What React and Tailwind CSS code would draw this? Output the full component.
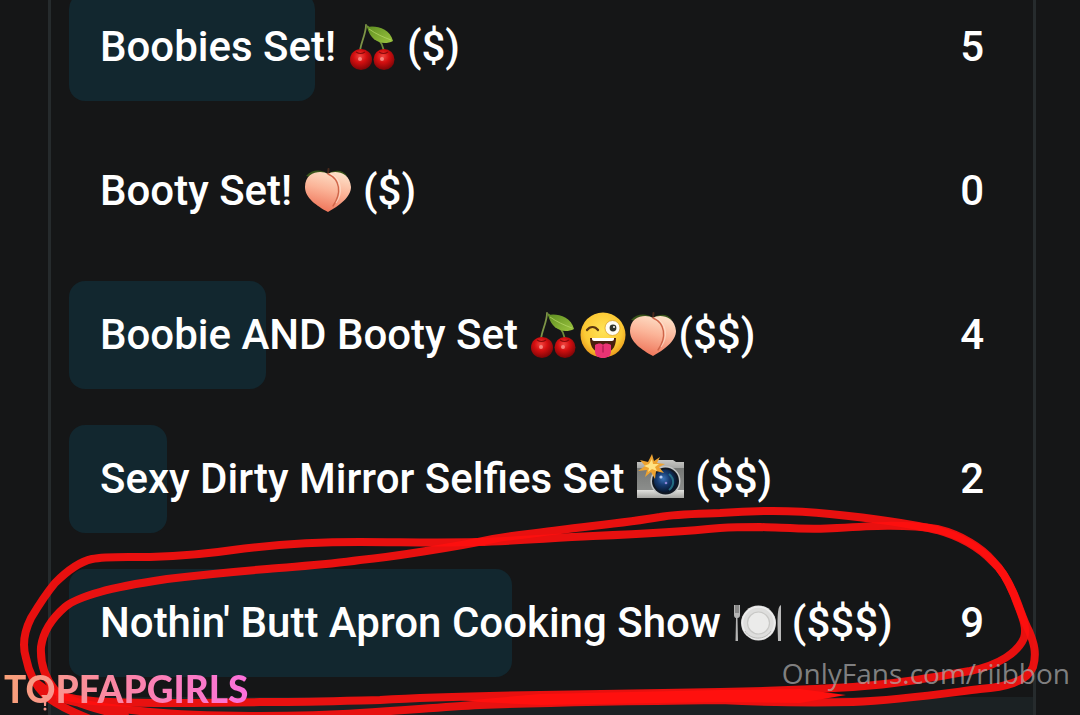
import React from 'react';

const Cherries = () => (
  <svg viewBox="0 0 50 50" className="h-[50px] w-[50px] shrink-0" role="img" aria-label="cherries">
    <defs>
      <radialGradient id="cherry" cx="0.45" cy="0.35" r="0.65">
        <stop offset="0" stopColor="#f2453f" />
        <stop offset="0.45" stopColor="#d40f10" />
        <stop offset="1" stopColor="#7d0507" />
      </radialGradient>
      <linearGradient id="leaf" x1="0" y1="0" x2="1" y2="1">
        <stop offset="0" stopColor="#5f8f22" />
        <stop offset="1" stopColor="#9cc43f" />
      </linearGradient>
    </defs>
    <path d="M19 3 C19 12 14 20 13 29" fill="none" stroke="#7d9447" strokeWidth="1.8" strokeLinecap="round" />
    <path d="M20 4 C28 12 35 19 37 29" fill="none" stroke="#6d8a3a" strokeWidth="1.8" />
    <path d="M20 5 C28 3 43 6 46 19 C36 24 24 20 20 5 Z" fill="url(#leaf)" />
    <path d="M22 7 C29 12 36 15 44 18" fill="none" stroke="#b4d665" strokeWidth="0.8" />
    <ellipse cx="14" cy="37.5" rx="11" ry="10.5" fill="url(#cherry)" />
    <ellipse cx="37" cy="37.5" rx="10.5" ry="10.5" fill="url(#cherry)" />
    <path d="M9 30 C12 32 15 32 18 30 M32 30 C35 32 38 32 41 30" fill="none" stroke="#8a0a0a" strokeWidth="1.2" />
    <circle cx="13" cy="37" r="2" fill="#ffa6a0" opacity="0.7" />
    <circle cx="35" cy="37" r="2" fill="#ffa6a0" opacity="0.7" />
  </svg>
);

const Peach = () => (
  <svg viewBox="0 0 50 50" className="h-[50px] w-[50px] shrink-0" role="img" aria-label="peach">
    <defs>
      <linearGradient id="peachSkin" x1="0.65" y1="0" x2="0.35" y2="1">
        <stop offset="0" stopColor="#fde0c8" />
        <stop offset="0.45" stopColor="#fbb498" />
        <stop offset="1" stopColor="#ee7257" />
      </linearGradient>
    </defs>
    <path d="M3 10 C9 3 19 3 25 8 C32 3 40 4 44 10 L25 15 Z" fill="#39541b" />
    <path d="M25 9 L25.5 3" stroke="#4a2a1c" strokeWidth="2" strokeLinecap="round" />
    <path
      d="M25 8 C30 4 47 5 48 21 C48 31 36 40 25 46 C14 40 2 32 2 21 C2 5 19 4 25 8 Z"
      fill="url(#peachSkin)"
    />
    <path d="M25 8 C37 13 39 27 30 40" fill="none" stroke="#cf6549" strokeWidth="1.4" strokeLinecap="round" />
    <path d="M28 8 C39 14 40 27 33 37" fill="none" stroke="#ffe6d5" strokeWidth="1.2" opacity="0.6" />
  </svg>
);

const Wink = () => (
  <svg viewBox="0 0 50 50" className="h-[50px] w-[50px] shrink-0" role="img" aria-label="winking face with tongue">
    <defs>
      <radialGradient id="face" cx="0.5" cy="0.4" r="0.6">
        <stop offset="0" stopColor="#ffe457" />
        <stop offset="0.7" stopColor="#fcc934" />
        <stop offset="1" stopColor="#e99a1c" />
      </radialGradient>
    </defs>
    <circle cx="25" cy="25" r="22.5" fill="url(#face)" />
    <path d="M9 20 C12 16 17 16 20 20" fill="none" stroke="#5b3510" strokeWidth="2.2" strokeLinecap="round" />
    <circle cx="34.5" cy="18" r="7.5" fill="#fffdf5" stroke="#dba32c" strokeWidth="0.8" />
    <circle cx="35" cy="18" r="3.4" fill="#30332c" />
    <circle cx="36" cy="17" r="1" fill="#fff" />
    <path d="M12 28 H38 C38 38 33 43 25 43 C17 43 12 38 12 28 Z" fill="#48200f" />
    <path d="M14 28 H36 V29 C36 30 35 31 34 31 H16 C15 31 14 30 14 29 Z" fill="#fff" />
    <path d="M17 35 C20 33 24 33 25 35 C26 33 30 33 33 35 V41 C33 46 30 48 25 48 C20 48 17 46 17 41 Z" fill="#ea3374" />
    <path d="M25 36 V42" stroke="#b41d54" strokeWidth="1.4" strokeLinecap="round" />
  </svg>
);

const Camera = () => (
  <svg viewBox="0 0 50 50" className="h-[50px] w-[50px] shrink-0" role="img" aria-label="camera with flash">
    <defs>
      <linearGradient id="cameraBody" x1="0" y1="0" x2="0" y2="1">
        <stop offset="0" stopColor="#c9c9c6" />
        <stop offset="0.2" stopColor="#a9aaa8" />
        <stop offset="0.22" stopColor="#777977" />
        <stop offset="0.78" stopColor="#8b8d8b" />
        <stop offset="0.8" stopColor="#dededb" />
        <stop offset="1" stopColor="#a5a5a2" />
      </linearGradient>
      <radialGradient id="lens" cx="0.4" cy="0.4" r="0.6">
        <stop offset="0" stopColor="#3b74ba" />
        <stop offset="0.45" stopColor="#173c72" />
        <stop offset="1" stopColor="#08152b" />
      </radialGradient>
    </defs>
    <path d="M2 8 H19 L22 6 H38 L41 8 H49 V44 H2 Z" fill="url(#cameraBody)" />
    <circle cx="30.5" cy="27" r="15" fill="#c4c6c6" />
    <circle cx="30.5" cy="27" r="13.5" fill="#101722" />
    <circle cx="30.5" cy="27" r="11.5" fill="url(#lens)" />
    <path d="M34 20 C40 25 39 32 34 36" fill="none" stroke="#2c8b9b" strokeWidth="2" opacity="0.7" />
    <circle cx="26" cy="23" r="1.6" fill="#b7cdf5" />
    <circle cx="31" cy="29" r="1.3" fill="#8c86d6" />
    <path
      d="M17 0 L19 7 L25 3 L22 9 L30 10 L24 13 L29 19 L21 17 L20 25 L16 18 L10 23 L12 16 L3 17 L10 12 L5 6 L13 8 Z"
      fill="#eda331"
    />
    <path d="M17 5 L18 10 L24 10 L20 13 L22 17 L17 15 L13 18 L14 14 L9 12 L14 10 Z" fill="#ffe383" />
  </svg>
);

const Plate = () => (
  <svg viewBox="0 0 50 50" className="h-[50px] w-[50px] shrink-0" role="img" aria-label="fork and knife with plate">
    <path d="M3 7 V17 C3 19 4 20 5 20 L4.5 43 H7 L6.5 20 C8 20 9 19 9 17 V7" fill="#b5b5b5" />
    <path d="M5 7 V15 M7 7 V15" stroke="#343434" strokeWidth="0.7" />
    <path d="M50 7 C47 8 46.5 16 46.5 26 L47 43 H50 Z" fill="#b9b9b9" />
    <circle cx="27.5" cy="25" r="17.5" fill="#dededd" />
    <circle cx="27.5" cy="25" r="16" fill="none" stroke="#eeeeee" strokeWidth="1.5" />
    <circle cx="27.5" cy="25" r="11" fill="#ebebea" stroke="#c8c8c6" strokeWidth="1.2" />
    <path d="M14 33 C19 42 34 43 40 33" fill="none" stroke="#b8b8b6" strokeWidth="1" />
  </svg>
);

const options = [
  { id: 1, title: 'Boobies Set! ', icons: [Cherries], price: ' ($)', votes: 5 },
  { id: 2, title: 'Booty Set! ', icons: [Peach], price: ' ($)', votes: 0 },
  { id: 3, title: 'Boobie AND Booty Set ', icons: [Cherries, Wink, Peach], price: '($$)', votes: 4 },
  { id: 4, title: 'Sexy Dirty Mirror Selfies Set ', icons: [Camera], price: ' ($$)', votes: 2 },
  { id: 5, title: "Nothin' Butt Apron Cooking Show ", icons: [Plate], price: ' ($$$)', votes: 9 },
];

// Share of the row that one vote fills, in percent
const VOTE_SHARE = 5.2;

const PollOption = ({ option }) => (
  <li>
    <button
      type="button"
      className="relative flex h-27 w-full items-center justify-between px-[31px] text-left text-[42px] leading-none font-medium text-white"
    >
      <span
        className="absolute inset-y-0 left-0 rounded-2xl bg-[#12272f]"
        style={{ width: `${option.votes * VOTE_SHARE}%` }}
      />
      <span className="relative flex items-center whitespace-pre">
        <span>{option.title}</span>
        {option.icons.map((Icon, i) => (
          <Icon key={i} />
        ))}
        <span>{option.price}</span>
      </span>
      <span className="relative">{option.votes}</span>
    </button>
  </li>
);

// Hand-drawn double loop round the last option
const MarkerLoop = () => (
  <svg
    viewBox="0 0 1080 215"
    className="pointer-events-none absolute bottom-0 left-0 w-full"
    fill="none"
    stroke="#ff100e"
    strokeWidth="8"
    strokeLinecap="round"
    strokeLinejoin="round"
    aria-hidden="true"
  >
    <path
      strokeOpacity="0.9"
      d="M38 184 C52 196 78 201 110 202 C160 204 210 203 267 202 C310 202 340 201 380 200 C430 197 480 196 540 195 C610 194 660 193 720 192 C780 191 820 189 853 187 C895 184 930 178 970 171 C1000 165 1018 152 1024 138 C1028 126 1020 112 1014 95 C1007 78 1000 68 993 61 C982 48 962 35 937 29 C905 24 870 26 837 28 C810 30 790 28 760 27 C745 27 735 27 720 28 C680 32 640 34 593 36 C550 38 515 41 477 42 C440 43 400 42 360 42 C310 42 270 45 233 50 C200 55 180 56 150 57 C125 57 105 56 92 59 C78 62 66 72 55 83 C45 95 37 108 31 118 C24 132 22 145 26 158 C29 174 36 186 45 195 C56 205 72 212 90 219"
    />
    <path
      strokeOpacity="0.9"
      d="M60 198 C85 206 120 209 150 212 C200 217 300 217 360 213 C410 210 440 207 480 205 C560 202 640 201 720 200 C760 202 810 203 853 202 C900 200 940 194 980 189 C1005 187 1027 182 1033 167 C1037 153 1034 143 1029 131 C1023 120 1019 105 1013 92 C1006 76 1000 68 993 62 C975 43 955 35 937 30 C903 22 870 18 830 14 C795 10 760 10 720 13 C690 14 675 14 660 17 C625 23 590 26 560 30 C530 34 515 35 493 39 C465 45 445 48 420 52 C395 56 380 58 360 60 C325 65 300 66 267 69 C230 72 200 75 167 79 C140 83 120 86 100 92 C82 97 72 101 65 107 C50 120 43 132 41 147 C40 165 45 178 55 190 C66 200 90 208 125 216"
    />
    <path d="M460 201 L540 194 L720 190 L800 189 L846 195 L800 203 L720 202 L540 205 Z" fill="#ff100e" stroke="none" />
  </svg>
);

export default function App() {
  return (
    <div className="relative flex h-screen flex-col overflow-hidden bg-[#151617] font-['Roboto',sans-serif]">
      <main className="mr-11 ml-12 flex flex-1 flex-col border-x-3 border-[#262b2d]">
        <ul className="-mt-[7px] mb-5 flex flex-col gap-9 px-[18px]">
          {options.map((option) => (
            <PollOption key={option.id} option={option} />
          ))}
        </ul>
        <div className="flex-1 bg-[#1b2123]" />
      </main>

      <MarkerLoop />

      <div className="absolute bottom-2 left-1 font-['Lato',sans-serif] text-[37px] leading-none font-black">
        <span className="bg-linear-to-r from-[#f8a078] via-[#fb84a8] to-[#fb70dc] bg-clip-text text-transparent">
          TOPFAPGIRLS
        </span>
        <svg viewBox="0 0 10 16" className="absolute -bottom-1 left-9 h-4 w-[10px]" aria-hidden="true">
          <path d="M1 0 H9 C7 2 6.5 5 6 11 H4 C4 5 3 2 1 0 Z" fill="#f9988a" />
          <circle cx="5" cy="14" r="1.5" fill="#f9988a" />
        </svg>
      </div>

      <p className="absolute right-[10px] bottom-[26px] font-['Open_Sans',sans-serif] text-[28px] leading-8 text-[#b0b0b0]/70">
        OnlyFans.com/riibbon
      </p>
    </div>
  );
}
